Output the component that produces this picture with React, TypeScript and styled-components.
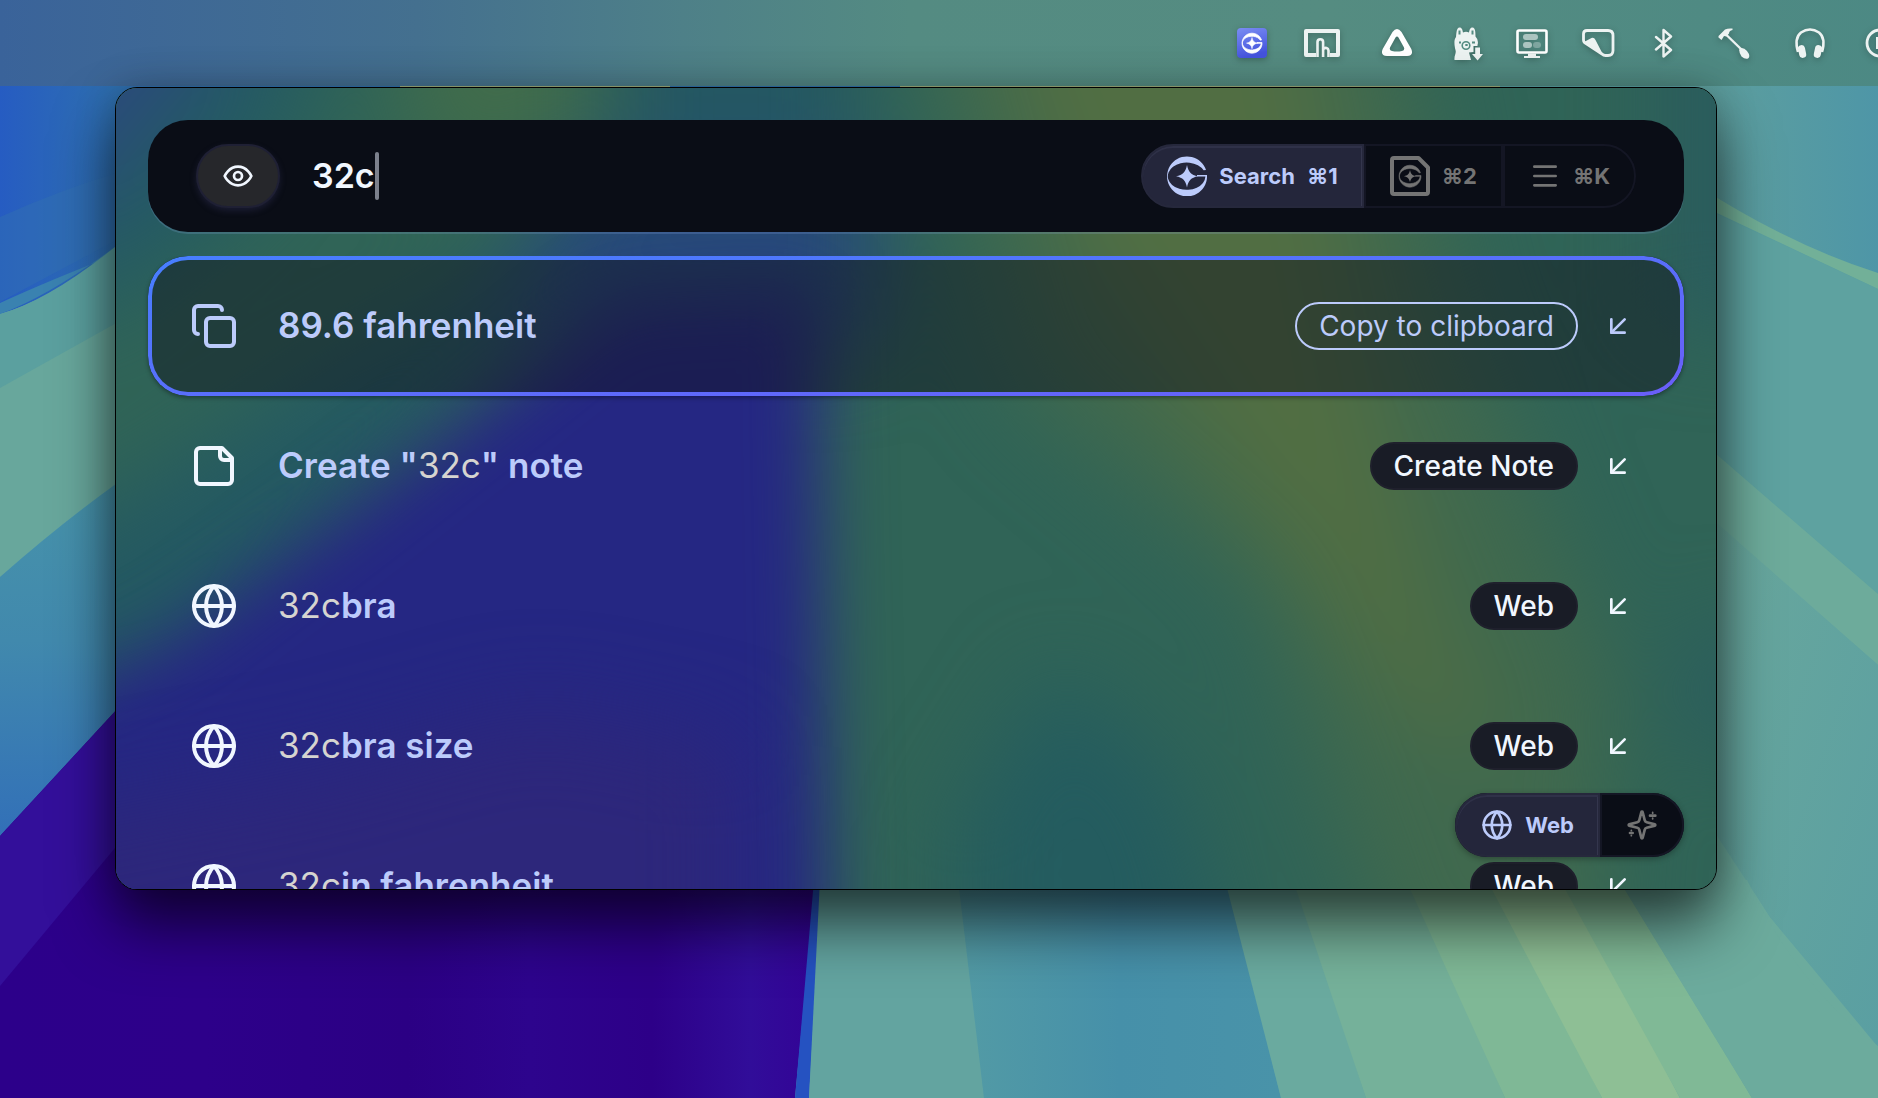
import React from "react";
import styled, { createGlobalStyle, css } from "styled-components";

const GlobalStyle = createGlobalStyle`
  *, *::before, *::after { box-sizing: border-box; }
  html, body { margin: 0; min-height: 100vh; background: #2c008a; }
  body, button, input { font-family: Inter, "Open Sans", "Liberation Sans", sans-serif; }
`;

const colors = {
  ink: "#0a0d16",
  lavender: "#bccbfb",
  white: "#f1f7ff",
  match: "#d5d4d0",
  muted: "#747474",
  selected: "#24263b",
  tag: "#191c26",
};

const Desktop = styled.div`
  position: relative;
  display: flex;
  flex-direction: column;
  min-height: 100vh;
  overflow: hidden;
  isolation: isolate;
`;

const WallpaperSvg = styled.svg`
  position: absolute;
  inset: 0;
  width: 100%;
  height: 100%;
  z-index: -1;
`;

const MenuBar = styled.header`
  display: flex;
  align-items: center;
  justify-content: flex-end;
  gap: 34px;
  height: 86px;
  padding-left: 32px;
  margin-right: -18px;
  background: linear-gradient(90deg, #3a639a 0%, #44708f 22%, #4e8088 36%, #548b82 48%, #558c81 70%, #4c8984 100%);
`;

const StatusIcon = styled.svg`
  flex: none;
  height: 36px;
  overflow: visible;
  color: #edf3f2;
  filter: drop-shadow(0 2px 3px rgba(0, 0, 0, 0.25));
`;

const Panel = styled.main`
  position: relative;
  display: flex;
  flex-direction: column;
  gap: 24px;
  height: 803px;
  margin: 1px 161px 0 115px;
  padding: 32px 32px 0;
  border: 1px solid #000;
  border-radius: 22px;
  background: #2f6457;
  box-shadow: 0 36px 60px rgba(0, 0, 0, 0.6), 0 0 40px rgba(0, 0, 0, 0.22);
  isolation: isolate;
`;

const Frost = styled.svg`
  position: absolute;
  inset: 0;
  width: 100%;
  height: 100%;
  border-radius: 21px;
  z-index: -1;
`;

const SearchBar = styled.form`
  display: flex;
  align-items: center;
  height: 112px;
  flex: none;
  margin: 0;
  padding: 0 48px;
  border-radius: 40px;
  background: ${colors.ink};
  box-shadow: 0 2px 0 rgba(160, 190, 255, 0.18);
`;

const PreviewButton = styled.button`
  display: grid;
  place-items: center;
  width: 84px;
  height: 64px;
  padding: 0;
  border: 2px solid #1f2034;
  border-radius: 32px;
  background: #26272b;
  color: ${colors.white};
  box-shadow: 0 3px 6px rgba(50, 50, 90, 0.4);
`;

const QueryField = styled.label`
  display: flex;
  align-items: center;
  flex: 1;
  min-width: 0;
  padding-left: 32px;
`;

const QueryInput = styled.input`
  field-sizing: content;
  min-width: 0;
  padding: 0;
  border: 0;
  outline: 0;
  background: transparent;
  color: ${colors.white};
  font-size: 34px;
  font-weight: 600;
  line-height: 48px;
`;

const Caret = styled.span`
  width: 4px;
  height: 48px;
  border-radius: 2px;
  background: #7c808c;
`;

const Segments = styled.div<{ $floating?: boolean }>`
  display: flex;
  height: 64px;
  flex: none;
  border-radius: 32px;
  background: ${colors.ink};
  ${(p) =>
    p.$floating &&
    css`
      position: absolute;
      right: 32px;
      bottom: 32px;
      box-shadow: 0 2px 6px rgba(0, 0, 0, 0.3);
    `}
`;

const Segment = styled.button<{ $active?: boolean }>`
  display: flex;
  align-items: center;
  gap: 12px;
  padding: 0 24px;
  border: 2px solid #141624;
  background: ${(p) => (p.$active ? colors.selected : "transparent")};
  color: ${(p) => (p.$active ? colors.lavender : colors.muted)};
  font-size: 22px;
  font-weight: 700;
  line-height: 32px;
  ${(p) =>
    p.$active &&
    css`
      border-color: #26283c;
      box-shadow: inset 0 2px 0 #2f3148, inset -1px 0 0 #34364d;
    `}
  &:first-child {
    border-radius: 32px 0 0 32px;
  }
  &:last-child {
    border-radius: 0 32px 32px 0;
  }
`;

const Results = styled.ul`
  flex: 1;
  min-height: 0;
  margin: 0 -32px;
  padding: 0 32px;
  overflow: hidden;
  border-radius: 0 0 21px 21px;
  list-style: none;
`;

const Row = styled.button<{ $active?: boolean }>`
  position: relative;
  display: flex;
  align-items: center;
  width: 100%;
  height: 140px;
  padding: 0 50px 0 42px;
  border: 0;
  border-radius: 40px;
  background: ${(p) => (p.$active ? "rgba(16, 20, 30, 0.47)" : "transparent")};
  box-shadow: ${(p) => (p.$active ? "0 2px 4px rgba(0, 0, 0, 0.35)" : "none")};
  color: ${(p) => (p.$active ? colors.lavender : colors.white)};
  text-align: left;
  ${(p) =>
    p.$active &&
    css`
      &::before {
        content: "";
        position: absolute;
        inset: 0;
        padding: 4px;
        border-radius: 40px;
        background: linear-gradient(to bottom right, #477fff, #6a5ef8);
        mask: linear-gradient(#000 0 0) content-box exclude, linear-gradient(#000 0 0);
      }
    `}
`;

const Title = styled.span`
  flex: 1;
  padding: 0 0 2px 40px;
  color: ${colors.lavender};
  font-size: 35px;
  font-weight: 600;
  line-height: 48px;
`;

const Match = styled.span`
  color: ${colors.match};
  font-weight: 400;
`;

const Tag = styled.span<{ $outlined?: boolean }>`
  display: inline-flex;
  align-items: center;
  height: 48px;
  margin-right: 24px;
  padding: 0 22px;
  border: 2px solid ${(p) => (p.$outlined ? colors.lavender : "#1f202c")};
  border-radius: 24px;
  background: ${(p) => (p.$outlined ? "transparent" : colors.tag)};
  font-size: 28px;
  font-weight: ${(p) => (p.$outlined ? 400 : 500)};
  line-height: 32px;
`;

const LineIcon = styled.svg`
  flex: none;
  fill: none;
  stroke: currentColor;
  stroke-width: 2;
  stroke-linecap: round;
  stroke-linejoin: round;
`;

type IconProps = { size: number };

const Line = ({ size, children }: IconProps & { children: React.ReactNode }) => (
  <LineIcon width={size} height={size} viewBox="0 0 24 24" aria-hidden="true">
    {children}
  </LineIcon>
);

const GlobeIcon = ({ size }: IconProps) => (
  <Line size={size}>
    <circle cx="12" cy="12" r="10" />
    <path d="M2 12h20" />
    <path d="M12 2a15.3 15.3 0 0 1 4 10 15.3 15.3 0 0 1-4 10 15.3 15.3 0 0 1-4-10 15.3 15.3 0 0 1 4-10z" />
  </Line>
);

const CopyIcon = ({ size }: IconProps) => (
  <Line size={size}>
    <rect x="8" y="8" width="14" height="14" rx="2" />
    <path d="M4 16c-1.1 0-2-.9-2-2V4c0-1.1.9-2 2-2h10c1.1 0 2 .9 2 2" />
  </Line>
);

const NoteIcon = ({ size }: IconProps) => (
  <Line size={size}>
    <path d="M16 3H5a2 2 0 0 0-2 2v14a2 2 0 0 0 2 2h14a2 2 0 0 0 2-2V8Z" />
    <path d="M15 3v4a2 2 0 0 0 2 2h4" />
  </Line>
);

const EyeIcon = ({ size }: IconProps) => (
  <Line size={size}>
    <path d="M2 12s3-7 10-7 10 7 10 7-3 7-10 7-10-7-10-7Z" />
    <circle cx="12" cy="12" r="3" />
  </Line>
);

const ArrowIcon = ({ size }: IconProps) => (
  <Line size={size}>
    <path d="M17 7 7 17" />
    <path d="M17 17H7V7" />
  </Line>
);

const MenuIcon = ({ size }: IconProps) => (
  <Line size={size}>
    <path d="M4 5h16M4 12h16M4 19h16" />
  </Line>
);

const SparklesIcon = ({ size }: IconProps) => (
  <Line size={size}>
    <path d="M9.937 15.5A2 2 0 0 0 8.5 14.063l-6.135-1.582a.5.5 0 0 1 0-.962L8.5 9.936A2 2 0 0 0 9.937 8.5l1.582-6.135a.5.5 0 0 1 .963 0L14.063 8.5A2 2 0 0 0 15.5 9.937l6.135 1.581a.5.5 0 0 1 0 .964L15.5 14.063a2 2 0 0 0-1.437 1.437l-1.582 6.135a.5.5 0 0 1-.963 0z" />
    <path d="M22 5h-4M5 18H3" />
    <path d="M20 2.6v.6M20 6.8v.6M4 16v.3M4 19.7v.3" strokeWidth="1.3" />
  </Line>
);

const orbitRing = "M39 14A20 20 0 1 0 40 19H30V20.6H38.4A18.8 13.7 0 1 1 36.6 14.3Z";
const orbitStar = "M20 9C21.4 16 24 18.8 31 20.3C24 21.8 21.4 24.5 20 31.5C18.6 24.5 16 21.8 9 20.3C16 18.8 18.6 16 20 9Z";

const OrbitIcon = ({ size }: IconProps) => (
  <svg width={size} height={size} viewBox="0 0 40 40" fill="currentColor" aria-hidden="true">
    <path d={orbitRing} />
    <path d={orbitStar} />
  </svg>
);

const OrbitNoteIcon = ({ size }: IconProps) => (
  <svg width={size} height={size} viewBox="0 0 40 40" fill="currentColor" aria-hidden="true">
    <path d="M4 2H28.5L38 11.5V36a2 2 0 0 1-2 2H4a2 2 0 0 1-2-2V4a2 2 0 0 1 2-2Z" fill="none" stroke="currentColor" strokeWidth="4" strokeLinejoin="round" />
    <g transform="translate(9 9) scale(.55)">
      <path d={orbitRing} stroke="currentColor" strokeWidth="1" />
      <path d={orbitStar} />
    </g>
  </svg>
);

const Wallpaper = () => (
  <WallpaperSvg viewBox="0 0 1878 1098" preserveAspectRatio="none" aria-hidden="true">
    <defs>
      <linearGradient id="skyBlue" x1="0" y1="0" x2="1" y2="0">
        <stop offset="0" stopColor="#265cc2" />
        <stop offset="0.13" stopColor="#2f70b0" />
        <stop offset="1" stopColor="#2f73ae" />
      </linearGradient>
      <linearGradient id="tealLeft" x1="0" y1="0" x2="0" y2="1">
        <stop offset="0" stopColor="#4793aa" />
        <stop offset=".45" stopColor="#4189ad" />
        <stop offset="1" stopColor="#3270b8" />
      </linearGradient>
      <linearGradient id="violet" x1="0" y1="0" x2="1" y2="0">
        <stop offset="0" stopColor="#2c008a" />
        <stop offset=".25" stopColor="#2d008a" />
        <stop offset=".5" stopColor="#2b0084" />
        <stop offset=".65" stopColor="#2d048d" />
        <stop offset=".8" stopColor="#2d0088" />
        <stop offset=".92" stopColor="#310d99" />
        <stop offset="1" stopColor="#330396" />
      </linearGradient>
      <linearGradient id="lagoon" x1="0" y1="0" x2="1" y2="0">
        <stop offset="0" stopColor="#539ba5" />
        <stop offset=".5" stopColor="#4690a9" />
        <stop offset="1" stopColor="#4993a9" />
      </linearGradient>
      <linearGradient id="eastTop" x1="0" y1="0" x2="1" y2="0">
        <stop offset="0" stopColor="#5fa09e" />
        <stop offset="1" stopColor="#4e96a7" />
      </linearGradient>
      <linearGradient id="eastMid" x1="0" y1="0" x2="1" y2="1">
        <stop offset="0" stopColor="#6aa89c" />
        <stop offset="1" stopColor="#5a9fa2" />
      </linearGradient>
    </defs>
    <rect width="1878" height="1098" fill="#5ba0a2" />
    <path d="M0 80H900V250H115Q50 300 0 314Z" fill="url(#skyBlue)" />
    <path d="M0 217Q60 190 120 172V238Q60 270 0 302Z" fill="#3272b2" opacity=".45" />
    <path d="M0 303Q50 280 120 253V243Q50 296 0 314Z" fill="#3a82b0" />
    <path d="M0 314Q50 300 120 243V330L0 388Z" fill="#5ba09f" />
    <path d="M0 388L120 321V490L0 577Z" fill="#68a79c" />
    <path d="M0 577Q60 524 120 481V715L0 836Z" fill="url(#tealLeft)" />
    <path d="M400 84H670V110H400ZM900 84H1500V110H900Z" fill="#9fae7c" />
    <path d="M0 836L120 706H815V889L795 1098H0Z" fill="url(#violet)" />
    <path d="M0 836L120 706V842L0 986Z" fill="#330f9a" />
    <path d="M814 880H822L809 1098H795Z" fill="#2552c1" />
    <path d="M820 880H962L984 1098H809Z" fill="#63a4a0" />
    <path d="M958 880H1228L1281 1098H984Z" fill="url(#lagoon)" />
    <path d="M1225 880H1296L1366 1098H1281Z" fill="#6aaa9f" />
    <path d="M1293 880H1412L1505 1098H1366Z" fill="#75b19a" />
    <path d="M1406 880H1494L1602 1098H1505Z" fill="#7fb896" />
    <path d="M1487 880H1566L1680 1098H1602Z" fill="#8ebf95" />
    <path d="M1560 880H1625L1752 1098H1680Z" fill="#80b996" />
    <path d="M1619 880L1717 831L1770 917L1878 1045V1098H1752Z" fill="#6cab9d" />
    <path d="M1700 86H1878V280L1700 200Z" fill="url(#eastTop)" />
    <path d="M1700 187Q1790 245 1878 273V289L1700 205Z" fill="#72b098" />
    <path d="M1700 206L1878 289V594L1700 440Z" fill="#5ea2a0" />
    <path d="M1700 440L1878 594V665L1700 510Z" fill="#6dab9b" />
    <path d="M1700 508L1878 665V1047L1770 917L1700 810Z" fill="url(#eastMid)" />
    <path d="M1747 880Q1800 990 1878 1046V1098H1752L1619 880Z" fill="#6cab9d" />
  </WallpaperSvg>
);

const FrostedBackdrop = () => (
  <Frost viewBox="0 0 1600 801" preserveAspectRatio="none" aria-hidden="true">
    <defs>
      <filter id="soft" x="-50%" y="-50%" width="200%" height="200%" colorInterpolationFilters="sRGB">
        <feGaussianBlur stdDeviation="44" />
      </filter>
      <filter id="edge" x="-50%" y="-50%" width="200%" height="200%" colorInterpolationFilters="sRGB">
        <feGaussianBlur stdDeviation="34" />
      </filter>
    </defs>
    <rect width="1600" height="801" fill="#306457" />
    <g filter="url(#soft)">
      <path d="M-120 -120H130V50L-120 180Z" fill="#2a4a7c" />
      <path d="M130 -80H220L150 100L-60 260V150Z" fill="#245a63" />
      <path d="M280 -120H480V50L300 100Z" fill="#416c4b" />
      <path d="M500 -120H740V120H500Z" fill="#245762" />
      <path d="M790 -120H1280L1340 200L1500 600L1480 900H1280L1140 500L900 300Z" fill="#40694e" />
      <path d="M860 -120H1180L1260 300L1330 560L1400 660L1300 640L1120 400L960 160Z" fill="#516e43" />
      <path d="M840 900V740L940 580L1060 690L1120 900Z" fill="#245c5f" />
      <path d="M1540 -120H1720V240H1540Z" fill="#2a5c5d" />
      <path d="M1560 540H1720V660H1560Z" fill="#2b5e5d" />
      <path d="M-120 480L60 380L240 260L480 130L120 600L-120 660Z" fill="#245962" />
      <path d="M460 80H760V260H360Z" fill="#274a7a" />
    </g>
    <g filter="url(#edge)">
      <path d="M-120 630L60 550L220 430L400 290L500 210L700 200L712 900H-120Z" fill="#252783" />
    </g>
    <g filter="url(#soft)">
      <path d="M-120 740L200 680L420 620L620 660V920H-120Z" fill="#2d277b" />
    </g>
  </Frost>
);

const StatusIcons = () => (
  <>
    <StatusIcon width="34" viewBox="0 0 34 36" aria-hidden="true">
      <defs>
        <linearGradient id="appTile" x1="0" y1="0" x2="0.3" y2="1">
          <stop offset="0" stopColor="#7a8df2" />
          <stop offset="1" stopColor="#4554de" />
        </linearGradient>
      </defs>
      <rect x="3" y="3" width="30" height="30" rx="4" fill="url(#appTile)" />
      <g transform="translate(8 8) scale(.5)" fill="#fff" stroke="#fff">
        <path d={orbitRing} strokeWidth="1.5" />
        <path d={orbitStar} />
      </g>
    </StatusIcon>
    <StatusIcon width="40" viewBox="0 0 40 36" fill="none" stroke="currentColor" aria-hidden="true">
      <path d="M14 30H4V6H36V30H28" strokeWidth="4" strokeLinejoin="round" />
      <path d="M15.5 32V17a2.8 2.8 0 0 1 5.6 0V32M21.5 24a2.8 2.8 0 0 1 5 1.5V32" strokeWidth="2.6" />
    </StatusIcon>
    <StatusIcon width="42" viewBox="0 0 42 36" aria-hidden="true">
      <path fill="#fff" fillRule="evenodd" d="M16.5 7Q21 .8 25.5 7L35.3 24Q38 31 31 31H11Q4 31 6.7 24ZM19.5 12.5Q21 10.5 22.5 12.5L28 22.5Q29 25.5 26 26Q21 27 16 26Q13 25.5 14 22.5Z" />
    </StatusIcon>
    <StatusIcon width="30" viewBox="0 0 30 36" aria-hidden="true">
      <path
        fill="currentColor"
        d="M4 12C4.5 8 4.5 2.5 7.5 2.5C10 2.5 10.5 5 11 7.5Q14 6 17 7.5C17.5 5 18 2.5 20.5 2.5C23.5 2.5 23.5 8 23.5 11.5Q27 15 25.5 20V21H21.5V27L17 27.5L19 35H2.5C2 30 4.5 29 3.5 25C2.5 21 1.5 15 4 12Z"
      />
      <path d="M7.5 5.5V9.5M20.5 5.5V9.5" stroke="#558c82" strokeWidth="2" />
      <circle cx="14" cy="20.5" r="3.8" fill="none" stroke="#558c82" strokeWidth="1.6" />
      <path d="M7 17.5H9M20 17.5H23M13.3 20H15.7" stroke="#558c82" strokeWidth="1.8" />
      <path d="M23.2 22.5H28V29H31L25.6 35.5L20 29H23.2Z" fill="currentColor" />
    </StatusIcon>
    <StatusIcon width="32" viewBox="0 0 32 36" aria-hidden="true">
      <rect x="1.5" y="5.5" width="29" height="22" rx="1.5" fill="none" stroke="#fff" strokeWidth="2.6" />
      <rect x="7" y="9" width="15" height="6" rx="3" fill="currentColor" opacity=".6" />
      <rect x="7" y="17" width="9" height="6" rx="3" fill="currentColor" opacity=".6" />
      <rect x="17" y="17" width="8" height="6" rx="3" fill="currentColor" opacity=".3" />
      <path d="M12 28.5H20V31H24V33H8V31H12Z" fill="currentColor" />
    </StatusIcon>
    <StatusIcon width="34" viewBox="0 0 34 36" aria-hidden="true">
      <path d="M5 5.5H26Q31 5.5 31 10.5V25.5Q31 30.5 26 30.5H23.5Q21.5 30.5 20 29L2.5 17.5Q1.5 16.5 1.5 15V9Q1.5 5.5 5 5.5Z" fill="none" stroke="currentColor" strokeWidth="2.8" strokeLinejoin="round" />
      <path d="M2 17L9.5 13Q12 12 13.5 15L21 29.5Z" fill="currentColor" />
    </StatusIcon>
    <StatusIcon width="28" viewBox="0 0 28 36" aria-hidden="true">
      <path d="M6 12L21 25L13.5 31.5V5L21 11.5L6 24.5" fill="none" stroke="currentColor" strokeWidth="2.4" strokeLinecap="round" strokeLinejoin="round" />
    </StatusIcon>
    <StatusIcon width="44" viewBox="0 0 44 36" aria-hidden="true">
      <path d="M6.5 11L13 4.5Q16 3 20.5 3.5L20.5 5Q17 5.5 17 8.5L14.5 11.5L12 11L9.5 15L6.5 12.5Z" fill="currentColor" />
      <path d="M14 9.5L30 25" stroke="currentColor" strokeWidth="2.4" />
      <path d="M27.5 23.5Q31.5 22 35 26Q39 31 36 33.5Q33 34.5 29.5 31.5Q26.5 27 27.5 23.5Z" fill="currentColor" />
    </StatusIcon>
    <StatusIcon width="40" viewBox="0 0 40 36" aria-hidden="true">
      <path d="M8 27Q4 13 11 7.5Q20 1.5 29 7.5Q36 13 32 27" fill="none" stroke="currentColor" strokeWidth="2.6" />
      <rect x="8.5" y="20" width="7" height="13" rx="3.5" transform="rotate(-12 12 26)" fill="currentColor" />
      <rect x="24.5" y="20" width="7" height="13" rx="3.5" transform="rotate(12 28 26)" fill="currentColor" />
    </StatusIcon>
    <StatusIcon width="32" viewBox="0 0 32 36" aria-hidden="true">
      <circle cx="16" cy="18" r="13" fill="none" stroke="currentColor" strokeWidth="2.8" />
      <rect x="12" y="12" width="9" height="12" fill="currentColor" />
    </StatusIcon>
  </>
);

type Result = {
  id: string;
  icon: React.ReactNode;
  title: React.ReactNode;
  action: string;
  active?: boolean;
};

const QUERY = "32c";

const results: Result[] = [
  { id: "convert", icon: <CopyIcon size={48} />, title: "89.6 fahrenheit", action: "Copy to clipboard", active: true },
  {
    id: "note",
    icon: <NoteIcon size={48} />,
    title: (
      <>
        Create "<Match>{QUERY}</Match>" note
      </>
    ),
    action: "Create Note",
  },
  ...["bra", "bra size", "in fahrenheit"].map((rest) => ({
    id: rest,
    icon: <GlobeIcon size={48} />,
    title: (
      <>
        <Match>{QUERY}</Match>
        {rest}
      </>
    ),
    action: "Web",
  })),
];

export default function App() {
  return (
    <>
      <GlobalStyle />
      <Desktop>
        <Wallpaper />
        <MenuBar>
          <StatusIcons />
        </MenuBar>
        <Panel>
          <FrostedBackdrop />
          <SearchBar onSubmit={(e) => e.preventDefault()}>
            <PreviewButton type="button" aria-label="Preview">
              <EyeIcon size={32} />
            </PreviewButton>
            <QueryField>
              <QueryInput type="text" aria-label="Search query" defaultValue={QUERY} />
              <Caret />
            </QueryField>
            <Segments>
              <Segment type="button" $active>
                <OrbitIcon size={40} />
                <span>Search</span>
                <span>⌘1</span>
              </Segment>
              <Segment type="button" aria-label="Notes">
                <OrbitNoteIcon size={40} />
                <span>⌘2</span>
              </Segment>
              <Segment type="button" aria-label="Menu">
                <MenuIcon size={32} />
                <span>⌘K</span>
              </Segment>
            </Segments>
          </SearchBar>
          <Results>
            {results.map((r) => (
              <li key={r.id}>
                <Row type="button" $active={r.active}>
                  {r.icon}
                  <Title>{r.title}</Title>
                  <Tag $outlined={r.active}>{r.action}</Tag>
                  <ArrowIcon size={32} />
                </Row>
              </li>
            ))}
          </Results>
          <Segments $floating>
            <Segment type="button" $active>
              <GlobeIcon size={32} />
              <span>Web</span>
            </Segment>
            <Segment type="button" aria-label="Assistant">
              <SparklesIcon size={32} />
            </Segment>
          </Segments>
        </Panel>
      </Desktop>
    </>
  );
}
